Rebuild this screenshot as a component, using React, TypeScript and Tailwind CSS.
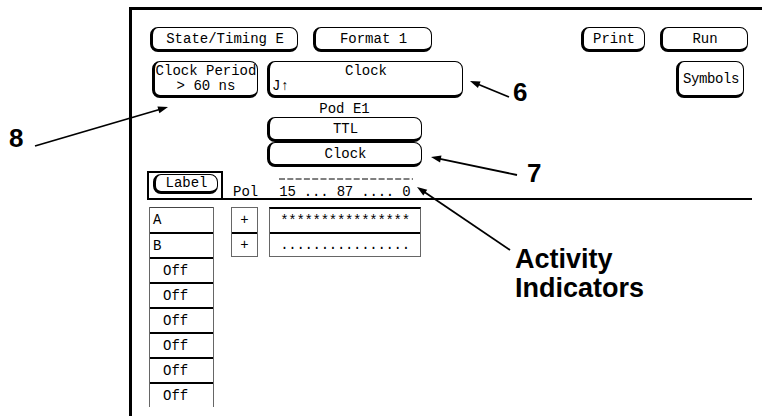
import React from 'react';

const Btn = ({ className = '', children }: { className?: string; children: React.ReactNode }) => (
  <div
    className={`flex items-center justify-center bg-white rounded-[8px] border border-black border-l-[3px] border-b-[3px] ${className}`}
  >
    {children}
  </div>
);

const Arrow = ({ x1, y1, x2, y2 }: { x1: number; y1: number; x2: number; y2: number }) => {
  const dx = x2 - x1;
  const dy = y2 - y1;
  const len = Math.hypot(dx, dy);
  const ux = dx / len;
  const uy = dy / len;
  const hl = 10;
  const hw = 3.5;
  const bx = x2 - ux * hl;
  const by = y2 - uy * hl;
  const pts = `${x2},${y2} ${bx - uy * hw},${by + ux * hw} ${bx + uy * hw},${by - ux * hw}`;
  return (
    <g>
      <line x1={x1} y1={y1} x2={bx + ux * 2} y2={by + uy * 2} stroke="black" strokeWidth={1.8} />
      <polygon points={pts} fill="black" />
    </g>
  );
};

const labels = ['A', 'B', 'Off', 'Off', 'Off', 'Off', 'Off', 'Off'];

export default function App() {
  return (
    <div className="relative w-[762px] h-[416px] overflow-hidden bg-white text-black">
      {/* analyzer screen */}
      <div className="ml-[129px] mt-[7px] h-[409px] border-l-[3px] border-t-[3px] border-black font-['Liberation_Mono',monospace] text-[14px] leading-[14px]">
        {/* row 1 */}
        <div className="flex mt-[17px] ml-[18px]">
          <Btn className="w-[148px] h-[25px]">State/Timing E</Btn>
          <Btn className="ml-[15px] w-[119px] h-[25px]">Format 1</Btn>
          <Btn className="ml-[149px] w-[64px] h-[25px]">Print</Btn>
          <Btn className="ml-[15px] w-[88px] h-[25px]">Run</Btn>
        </div>

        {/* row 2 */}
        <div className="flex mt-[9px] ml-[20px]">
          <Btn className="w-[106px] h-[37px] flex-col gap-[1px]">
            <span>Clock Period</span>
            <span>&gt; 60 ns</span>
          </Btn>
          <Btn className="ml-[9px] w-[196px] h-[37px] flex-col !items-stretch gap-[1px]">
            <span className="text-center">Clock</span>
            <span className="pl-[2px]">J↑</span>
          </Btn>
          <Btn className="ml-[213px] w-[68px] h-[37px] tracking-[-0.4px]">Symbols</Btn>
        </div>

        {/* pod */}
        <div className="ml-[135px] w-[155px]">
          <div className="mt-[4px] text-center">Pod E1</div>
          <Btn className="mt-[1px] w-[155px] h-[25px]">TTL</Btn>
          <Btn className="w-[155px] h-[25px]">Clock</Btn>
        </div>

        {/* label row */}
        <div className="flex items-end ml-[15px] mt-[4px] w-[605px] h-[29px] border-b-2 border-black">
          <div className="w-[76px] h-[27px] border-2 border-b-0 border-black pl-[4px] pt-[1px]">
            <Btn className="w-[65px] h-[20px]">Label</Btn>
          </div>
          <div className="ml-[10px] -mb-[1px]">Pol</div>
          <div className="ml-[21px] -mb-[1px] flex flex-col">
            <svg width="134" height="4" className="mb-[4px]">
              <line x1="0" y1="2" x2="134" y2="2" stroke="black" strokeWidth="1" strokeDasharray="6 2.3" />
            </svg>
            <span className="tracking-[-0.2px]">15 ... 87 .... 0</span>
          </div>
        </div>

        {/* channel list */}
        <div className="flex items-start ml-[17px] mt-[7px]">
          <div className="w-[65px] border-x border-[#666]">
            {labels.map((l, i) => (
              <div
                key={i}
                className={`h-[25px] flex items-center ${i === 0 ? 'border-t border-[#444]' : 'border-t-2 border-black'} ${l === 'Off' ? 'pl-[13px]' : 'pl-[3px]'}`}
              >
                {l}
              </div>
            ))}
          </div>
          <div className="ml-[17px] w-[27px] border border-[#666]">
            <div className="h-[24px] flex items-center justify-center">+</div>
            <div className="h-[24px] flex items-center justify-center border-t-2 border-black">+</div>
          </div>
          <div className="ml-[11px] w-[152px] border border-[#666] border-t-2 border-t-black">
            <div className="h-[23px] flex items-center justify-center tracking-[-0.3px]">****************</div>
            <div className="h-[24px] flex items-center justify-center border-t-2 border-black tracking-[-0.3px]">
              ................
            </div>
          </div>
        </div>
      </div>

      {/* callouts */}
      <svg className="absolute inset-0 pointer-events-none" width="762" height="416">
        <Arrow x1={35} y1={146} x2={168} y2={107} />
        <Arrow x1={509} y1={97} x2={470} y2={81} />
        <Arrow x1={517} y1={175} x2={431} y2={157} />
        <Arrow x1={510} y1={250} x2={417} y2={187} />
      </svg>
      <div className="absolute left-[9px] top-[125px] font-['Liberation_Sans',Arial,sans-serif] font-bold text-[26px] leading-none">8</div>
      <div className="absolute left-[513px] top-[79px] font-['Liberation_Sans',Arial,sans-serif] font-bold text-[26px] leading-none">6</div>
      <div className="absolute left-[527px] top-[160px] font-['Liberation_Sans',Arial,sans-serif] font-bold text-[26px] leading-none">7</div>
      <div className="absolute left-[515px] top-[245px] font-['Liberation_Sans',Arial,sans-serif] font-bold text-[27px] leading-[29px]">
        Activity
        <br />
        Indicators
      </div>
    </div>
  );
}
